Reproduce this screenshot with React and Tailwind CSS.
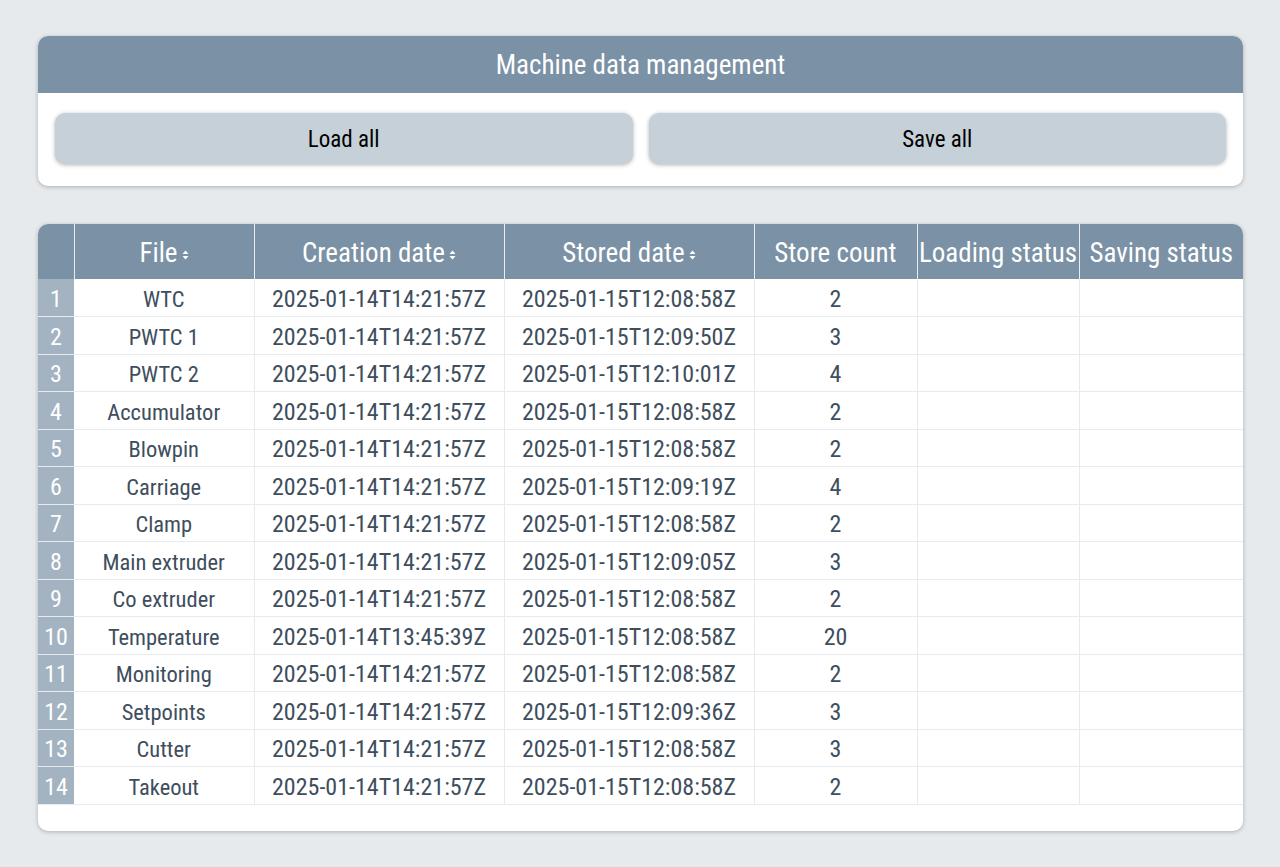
import React from 'react';

const rows = [
  ['WTC', '2025-01-14T14:21:57Z', '2025-01-15T12:08:58Z', 2],
  ['PWTC 1', '2025-01-14T14:21:57Z', '2025-01-15T12:09:50Z', 3],
  ['PWTC 2', '2025-01-14T14:21:57Z', '2025-01-15T12:10:01Z', 4],
  ['Accumulator', '2025-01-14T14:21:57Z', '2025-01-15T12:08:58Z', 2],
  ['Blowpin', '2025-01-14T14:21:57Z', '2025-01-15T12:08:58Z', 2],
  ['Carriage', '2025-01-14T14:21:57Z', '2025-01-15T12:09:19Z', 4],
  ['Clamp', '2025-01-14T14:21:57Z', '2025-01-15T12:08:58Z', 2],
  ['Main extruder', '2025-01-14T14:21:57Z', '2025-01-15T12:09:05Z', 3],
  ['Co extruder', '2025-01-14T14:21:57Z', '2025-01-15T12:08:58Z', 2],
  ['Temperature', '2025-01-14T13:45:39Z', '2025-01-15T12:08:58Z', 20],
  ['Monitoring', '2025-01-14T14:21:57Z', '2025-01-15T12:08:58Z', 2],
  ['Setpoints', '2025-01-14T14:21:57Z', '2025-01-15T12:09:36Z', 3],
  ['Cutter', '2025-01-14T14:21:57Z', '2025-01-15T12:08:58Z', 3],
  ['Takeout', '2025-01-14T14:21:57Z', '2025-01-15T12:08:58Z', 2],
];

const SortIcon = () => (
  <svg width="7" height="12" viewBox="0 0 7 12" className="inline-block ml-1 align-middle">
    <path d="M3.5 1.5 L6.5 5 H0.5 Z" fill="white" />
    <path d="M3.5 10.5 L6.5 7 H0.5 Z" fill="white" />
  </svg>
);

const font = { fontFamily: '"Roboto Condensed", Roboto, "Liberation Sans", sans-serif', fontStretch: 'condensed' };

export default function App() {
  return (
    <div className="min-h-[867px] bg-[#e6eaed] px-[38px] pt-[36px]" style={font}>
      <div className="w-[1205px] bg-white rounded-[10px] shadow-[0_1px_4px_rgba(0,0,0,0.25)] overflow-hidden">
        <div className="h-[57px] bg-[#7b91a5] flex items-center justify-center pt-[2px] text-white text-[27px]">
          Machine data management
        </div>
        <div className="flex gap-4 px-[17px] pt-5 pb-[22px]">
          <button className="flex-1 h-[51px] pt-[3px] bg-[#c5d0d8] rounded-[10px] shadow-[0_1px_4px_rgba(0,0,0,0.3)] text-[23px] text-black">
            Load all
          </button>
          <button className="flex-1 h-[51px] pt-[3px] bg-[#c5d0d8] rounded-[10px] shadow-[0_1px_4px_rgba(0,0,0,0.3)] text-[23px] text-black">
            Save all
          </button>
        </div>
      </div>

      <div className="mt-[38px] w-[1205px] bg-white rounded-[10px] shadow-[0_1px_4px_rgba(0,0,0,0.25)] overflow-hidden pb-[26px]">
        <table className="w-full border-collapse table-fixed">
          <colgroup>
            <col className="w-[36px]" />
            <col className="w-[180px]" />
            <col className="w-[250px]" />
            <col className="w-[250px]" />
            <col className="w-[163px]" />
            <col className="w-[162px]" />
            <col className="w-[164px]" />
          </colgroup>
          <thead>
            <tr className="h-[55px] bg-[#7b91a5] text-white text-[27px] leading-[32px]">
              <th className="font-normal"></th>
              <th className="font-normal pt-[3px] border-l border-[#e8ecef]">File<SortIcon /></th>
              <th className="font-normal pt-[3px] border-l border-[#e8ecef]">Creation date<SortIcon /></th>
              <th className="font-normal pt-[3px] border-l border-[#e8ecef]">Stored date<SortIcon /></th>
              <th className="font-normal pt-[3px] border-l border-[#e8ecef] whitespace-nowrap">Store count</th>
              <th className="font-normal pt-[3px] border-l border-[#e8ecef] whitespace-nowrap">Loading status</th>
              <th className="font-normal pt-[3px] border-l border-[#e8ecef] whitespace-nowrap">Saving status</th>
            </tr>
          </thead>
          <tbody>
            {rows.map((r, i) => (
              <tr key={i} className="h-[37.5px] text-[24px] leading-[28px] text-[#3e4e5d] border-b border-[#e8ebee]">
                <td className="bg-[#a3b3c1] text-white text-center pt-[3px]">{i + 1}</td>
                <td className="text-center text-[22.5px] pt-[3px]">{r[0]}</td>
                <td className="text-center pt-[3px] border-l border-[#e8ebee]">{r[1]}</td>
                <td className="text-center pt-[3px] border-l border-[#e8ebee]">{r[2]}</td>
                <td className="text-center pt-[3px] border-l border-[#e8ebee]">{r[3]}</td>
                <td className="border-l border-[#e8ebee]"></td>
                <td className="border-l border-[#e8ebee]"></td>
              </tr>
            ))}
          </tbody>
        </table>
      </div>
    </div>
  );
}
